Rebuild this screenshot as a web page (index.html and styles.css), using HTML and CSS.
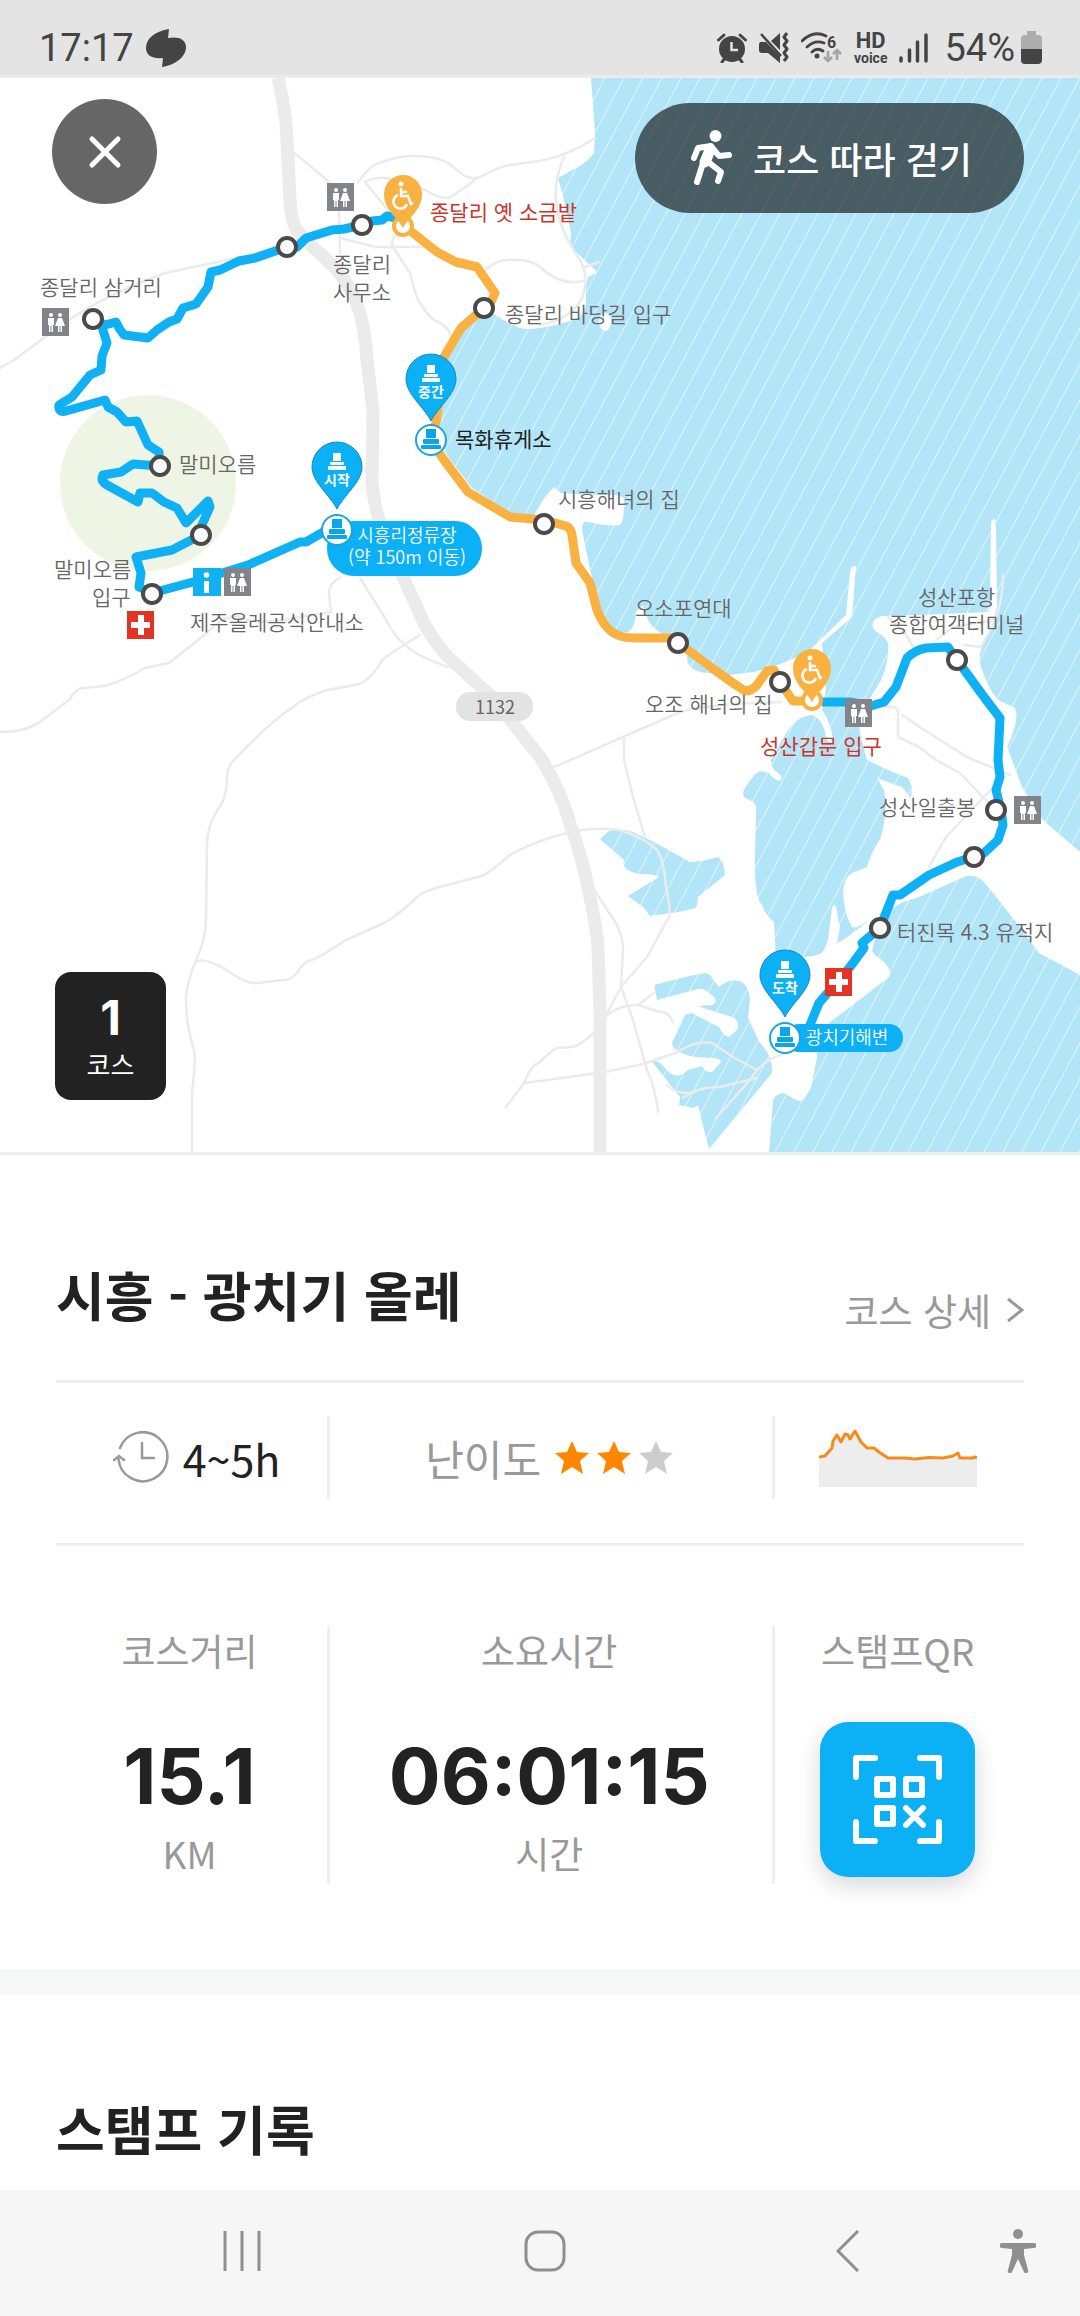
FILE: index.html
```html
<!DOCTYPE html>
<html lang="ko">
<head>
    <meta charset="UTF-8">
    <meta name="viewport" content="width=device-width, initial-scale=1.0">
    <title>시흥 - 광치기 올레</title>
    <link rel="stylesheet" href="styles.css">
</head>
<body>
    <header class="status-bar">
        <span class="status-text">17:17</span>
        <svg class="status-app" width="40" height="38" viewBox="0 0 40 38"><path fill="#444" d="M23 0C10 2 0 9 0 19c0 8 7 11 17 10l-1 9c13-2 24-10 24-20 0-8-8-11-18-9z"/></svg>
        <div class="status-icons">
            <svg width="30" height="30" viewBox="0 0 30 30"><circle cx="15" cy="16" r="13" fill="#444"/><path d="M1.500 7 7 2M28.500 7 23 2M5 29l4-5M25 29l-4-5" stroke="#444" stroke-width="3" stroke-linecap="round"/><path d="M14.500 9v8H21" fill="none" stroke="#e4e4e4" stroke-width="2.500"/></svg>
            <svg width="30" height="31" viewBox="0 0 30 31"><path fill="#444" d="M1 10h6l14 14v7L9 21H3a3 3 0 0 1-3-3v-6zM21 1v17L12 9z"/><path d="M2 2l20 22" stroke="#444" stroke-width="2.500"/><path d="M28 1l-3 4 3 4-3 4 3 4-3 4 3 4-3 4" fill="none" stroke="#444" stroke-width="3" stroke-linejoin="round"/></svg>
            <svg width="41" height="31" viewBox="0 0 41 31"><path d="M1 9C9 1 17 0 25 4M6 15c6-6 12-6 17-4M11 20c4-4 8-3 11-1" fill="none" stroke="#444" stroke-width="2.800" stroke-linecap="round"/><circle cx="16" cy="24" r="2.500" fill="#444"/><text class="wifi-gen" x="26" y="16">6</text><path d="M27 19v10m-4-4 4 4 4-4M36 28V18m-4 4 4-4 4 4" fill="none" stroke="#a4a4a4" stroke-width="2.600"/></svg>
            <span class="hd"><b>HD</b><small>voice</small></span>
            <svg width="29" height="30" viewBox="0 0 29 30"><path d="M2 25v3M10.500 17v11M18.500 9v19M27 2v26" stroke="#444" stroke-width="3.500" stroke-linecap="round"/></svg>
        </div>
        <span class="status-text">54%</span>
        <svg class="status-battery" width="21" height="33" viewBox="0 0 21 33"><path fill="#adadad" d="M6 0h9v4h2a4 4 0 0 1 4 4v11H0V8a4 4 0 0 1 4-4h2z"/><path fill="#444" d="M0 18h21v11a4 4 0 0 1-4 4H4a4 4 0 0 1-4-4z"/></svg>
    </header>

    <main>
        <section class="map">
            <svg class="map-canvas" viewBox="0 78 1080 1074" role="img" aria-label="1코스 지도">
                <defs>
                    <pattern id="hatch" width="19" height="40" patternUnits="userSpaceOnUse" patternTransform="skewX(-28)">
                        <rect width="19" height="40" fill="#b3e5f8"/>
                        <rect width="1" height="40" fill="#e3f6fd"/>
                    </pattern>
                    <g id="stones">
                        <rect x="-4" y="-14" width="8" height="8"/>
                        <rect x="-7" y="-5" width="14" height="3" rx="1"/>
                        <rect x="-9" y="-1" width="18" height="4" rx="1"/>
                    </g>
                    <g id="pin">
                        <path d="M0 42C-7 28-25 15-25 0a25 25 0 0 1 50 0C25 15 7 28 0 42z" fill="#0bb0f5" stroke="#1487be"/>
                        <use href="#stones" fill="#fff"/>
                    </g>
                    <g id="stamp">
                        <circle r="15" fill="#fff" stroke="#1aa5e2" stroke-width="2"/>
                        <g fill="#0ba6ea">
                            <rect x="-5" y="-11" width="10" height="9"/>
                            <rect x="-8" y="-1" width="16" height="5" rx="1"/>
                            <rect x="-10" y="5" width="20" height="4" rx="1"/>
                        </g>
                    </g>
                    <g id="wheel">
                        <circle cy="32" r="9" fill="#fff" stroke="#f9b141" stroke-width="4"/>
                        <path d="M0 34C-5 24-19 16-19 0a19 19 0 0 1 38 0C19 16 5 24 0 34z" fill="#f9b141"/>
                        <circle cx="-2" cy="-10" r="2.500" fill="#fff"/>
                        <path d="M-2-6V2H5l3 8 2-1M-2-2H4M-5 1a7 7 0 1 0 9 9" fill="none" stroke="#fff" stroke-width="2.500"/>
                    </g>
                    <g id="restroom">
                        <rect width="27" height="28" fill="#828489"/>
                        <g fill="#fff">
                            <circle cx="9" cy="7" r="2"/><circle cx="18" cy="7" r="2"/>
                            <path d="M6 10h6v7h-1v7H9.500v-6h-1v6H7v-7H6zM16 10h4l3 8h-3v6h-1.500v-6h-1v6H16v-6h-3z"/>
                        </g>
                    </g>
                    <g id="aid">
                        <rect width="27" height="28" fill="#e23325"/>
                        <path d="M11 4h6v7h6v6h-6v7h-6v-7H4v-6h7z" fill="#fff"/>
                    </g>
                    <circle id="stop" r="9" fill="#fff" stroke="#4a4a4a" stroke-width="4"/>
                </defs>

                <rect y="78" width="1080" height="1074" fill="#fff"/>

                <!-- sea, bay and ponds -->
                <g fill="url(#hatch)">
                    <path d="M591 78L595 133L594 153Q588 161 578 167L558 178L562 192L567 213L571 233L570 247L578 254L592 267Q597 270 596 273L588 277L586 287V303Q585 313 578 318L560 324L540 328Q528 330 520 328Q508 324 496 315L484 308L461 333L448 358L439 410V440L448 457L472 488L510 513L534 515L545 497L554 487L561 493Q585 495 609 495Q626 494 624 502Q624 524 619 525Q612 527 588 522Q582 520 582 530L586 550L593 583L597 607L616 632L628 632Q635 628 636 612L643 605L648 620Q650 626 666 637L688 653Q685 662 692 668Q698 673 709 673L729 675L754 672L778 665L795 658L812 648L846 615L850 573Q851 564 856 566L852 617L822 643L826 690L822 710Q831 722 834 745L827 740Q823 718 812 715Q796 716 785 735L771 760Q771 769 777 772Q785 778 779 781Q773 779 769 773Q758 768 753 777Q740 792 744 797L753 802Q757 805 756 813L755 853Q754 898 762 905Q765 915 774 922L776 960L805 957Q821 956 824 950L828 940L832 908Q835 901 837 910Q838 922 840 927L837 943Q848 938 869 920Q856 929 852 927Q846 916 845 907Q839 882 852 873L867 867Q870 855 881 837Q888 810 884 790L877 778Q895 785 902 787L911 798L912 787L908 778L888 770L867 760L860 733Q858 720 864 710L871 697L881 680Q890 658 888 643Q887 638 874 630Q869 621 881 616L919 615L988 612L990 607L991 523Q994 515 996 523L997 607L991 630L982 647Q978 658 981 667Q988 688 998 700L1015 708Q1020 720 1007 747L1012 760L1022 787L1043 820L1080 852V78Z"/>
                    <path d="M881 917Q895 903 919 897L964 877Q975 873 984 882L1001 903L1022 930L1039 953L1080 975V1152H769L773 1100Q776 1093 785 1093Q798 1103 803 1100Q811 1090 812 1083L817 1057V1035L829 1023L888 978Q894 973 884 962Q872 954 872 950Z"/>
                    <path d="M600 839L609 831Q620 828 633 832L654 842L690 862L702 861L718 857Q724 860 725 875L698 897L697 907Q690 911 650 916L643 907L628 896L659 877Q656 874 640 874Q620 870 624 860Z"/>
                    <path d="M654 985L685 977L705 973Q711 974 712 978L719 987Q730 978 738 981Q748 982 750 1000L748 1018L760 1043Q773 1056 772 1073L709 1149L704 1130L698 1105L693 1108L679 1105L680 1097L664 1077L651 1060L659 1062L669 1072Q678 1080 688 1070L702 1066Q706 1073 712 1072L721 1062Q720 1058 712 1058L695 1057Q672 1052 672 1043L685 1015L692 1013L709 1022L719 1027Q725 1039 730 1036Q738 1030 738 1027Q739 1020 732 1017L697 1006L712 1005Q718 1002 714 997Q704 987 698 989L657 1000Z"/>
                </g>
                <ellipse cx="605" cy="322" rx="6" ry="9" fill="#fff"/>

                <circle cx="148" cy="483" r="88" fill="#eef5e5"/>

                <!-- roads -->
                <g fill="none" stroke="#ebebeb" stroke-width="2.500" stroke-linejoin="round" stroke-linecap="round">
                    <path d="M0 368L14 360L60 326Q100 297 165 273L241 257"/>
                    <path d="M293 152L327 180Q339 190 339 213L340 253"/>
                    <path d="M358 182Q372 164 379 163Q400 155 417 156Q435 156 448 163L462 174Q470 180 480 177Q500 166 510 165L540 161Q570 155 595 138"/>
                    <path d="M365 182Q382 174 395 181Q410 182 425 190Q437 198 448 198Q460 192 477 178M365 182L396 220"/>
                    <path d="M341 238L375 247H427M399 230Q390 240 393 247L410 273Q414 290 418 300Q428 316 434 320Q450 327 451 337"/>
                    <path d="M482 273Q494 261 506 260Q530 258 540 267Q560 286 583 281M583 268L599 262"/>
                    <path d="M564 157Q551 187 558 212Q560 229 578 257Q590 275 583 295Q575 318 540 325"/>
                    <path d="M0 732Q30 732 45 718L69 700Q77 687 84 688L105 686Q125 680 145 668L169 663L207 633Q225 614 240 617Q255 626 293 618L331 612L329 593Q328 584 341 577"/>
                    <path d="M373 450L365 470M360 578L382 613Q395 637 403 643Q412 654 448 667"/>
                    <path d="M420 635Q395 650 382 660Q372 679 359 684Q340 688 327 690Q305 697 293 707Q270 722 234 760Q227 767 227 777Q227 793 222 803Q206 826 207 847L206 917Q206 940 196 960Q186 985 186 1000Q186 1025 194 1050Q196 1060 192 1093V1152"/>
                    <path d="M196 961Q210 958 234 975Q250 985 258 983L282 980Q290 981 297 973Q304 961 312 960Q324 955 344 941L386 922Q402 912 417 897Q424 890 455 883L482 876Q489 873 510 855Q525 846 552 837L574 831Q600 827 620 830Q645 838 657 850Q664 860 666 887Q671 910 669 917L647 957L621 987L605 1017"/>
                    <path d="M552 768L616 740L678 713Q700 704 781 702M624 737V760L633 797L645 837"/>
                    <path d="M593 888L616 923Q624 940 623 950L621 987L633 1020L647 1070Q656 1090 658 1112"/>
                    <path d="M605 1017Q620 1004 638 1005L654 993M638 1005L660 1012Q668 1011 673 1022"/>
                    <path d="M506 1107L524 1083Q530 1066 540 1062Q552 1050 557 1048L572 1047Q578 1047 595 1032M524 1083L540 1081L605 1072L643 1064L678 1052Q695 1040 712 1043L733 1057L757 1070"/>
                    <path d="M667 1085Q675 1094 692 1093Q700 1087 720 1087L757 1078M683 1098L694 1091M716 1118L750 1080Q762 1060 781 1055"/>
                    <path d="M884 707Q900 705 898 715V737L919 747L936 760L960 773L979 793L996 810M902 715L929 733L967 757L1010 775M1000 780L946 837L929 867"/>
                    <path d="M888 617L905 633L915 650M936 640L953 627L995 620Q1003 600 1003 575M964 645L981 647L995 622"/>
                </g>
                <path d="M278 78Q286 110 287 140L290 200Q291 222 297 230Q307 243 324 257Q348 278 358 307Q365 327 367 360L373 410L372 477Q372 495 379 520L403 577L424 623Q432 639 448 657L492 697L540 757Q561 790 571 827Q583 860 588 887Q597 930 598 947L600 1013V1152" fill="none" stroke="#ebebeb" stroke-width="13"/>

                <!-- walking route -->
                <g fill="none" stroke="#0fb0f4" stroke-width="9" stroke-linejoin="round">
                    <path d="M396 218L387 216L382 220L372 221L362 225L344 229L332 230L306 238L297 247L287 247L255 258L239 261L220 270L211 272L208 287L196 304L183 308L177 319L169 322L157 330L148 338L124 335L119 328L116 322L105 325L93 319L102 327L107 343L102 356L101 370L90 375L72 397L59 405Q58 413 66 411L105 400L108 407L117 412L126 422L137 421L148 445L159 452L160 466L133 464L121 472L103 475Q100 481 107 485L138 502L140 493L152 493L164 502L177 508L186 523L208 501L210 507L201 527V535L172 550L136 557L141 573L139 587L152 593L193 582L248 565L300 542H306L325 531"/>
                    <path d="M822 702H850L871 706L884 702L896 687L907 658Q915 650 926 648L948 647L957 660L984 697L1000 718L998 760L1000 777L996 790L1001 810L1003 825L998 840L984 853L974 857L957 862L929 875L900 895L893 895L880 928L862 943L864 948L850 967L819 1003L808 1030"/>
                </g>
                <path d="M404 225L413 233L437 252L456 262L477 267L495 293L491 302L484 308L461 328L444 357L436 423L430 440L444 460L468 492L510 517L544 520L566 526Q571 528 572 535L576 563L590 583L597 610Q602 624 612 632Q620 638 636 638L672 638L712 668L733 683L745 691Q752 691 757 685L767 671L774 670L780 682L793 701H812" fill="none" stroke="#f9b141" stroke-width="9" stroke-linejoin="round"/>

                <use href="#stop" x="93" y="319"/>
                <use href="#stop" x="287" y="247"/>
                <use href="#stop" x="362" y="225"/>
                <use href="#stop" x="484" y="308"/>
                <use href="#stop" x="160" y="466"/>
                <use href="#stop" x="201" y="535"/>
                <use href="#stop" x="152" y="594"/>
                <use href="#stop" x="544" y="524"/>
                <use href="#stop" x="678" y="643"/>
                <use href="#stop" x="780" y="682"/>
                <use href="#stop" x="957" y="660"/>
                <use href="#stop" x="996" y="810"/>
                <use href="#stop" x="974" y="857"/>
                <use href="#stop" x="880" y="928"/>

                <use href="#wheel" x="403" y="194"/>
                <use href="#wheel" x="812" y="668"/>

                <use href="#restroom" x="327" y="183"/>
                <use href="#restroom" x="42" y="308"/>
                <use href="#restroom" x="224" y="568"/>
                <use href="#restroom" x="845" y="699"/>
                <use href="#restroom" x="1014" y="796"/>
                <use href="#aid" x="127" y="611"/>
                <use href="#aid" x="825" y="968"/>
                <rect x="193" y="568" width="28" height="28" fill="#0fb0f4"/>
                <path d="M204 581h5v12h-5z" fill="#fff"/>
                <circle cx="206.500" cy="575" r="2.800" fill="#fff"/>

                <!-- start, middle and finish stamps -->
                <rect x="327" y="521" width="155" height="55" rx="27" fill="#0bb0f5"/>
                <rect x="785" y="1024" width="118" height="28" rx="14" fill="#0bb0f5"/>
                <use href="#stamp" x="337" y="530"/>
                <use href="#stamp" x="431" y="440"/>
                <use href="#stamp" x="785" y="1038"/>
                <use href="#pin" x="337" y="467"/>
                <use href="#pin" x="431" y="379"/>
                <use href="#pin" x="785" y="975"/>
                <g class="pin-label">
                    <text x="337" y="485">시작</text>
                    <text x="431" y="397">중간</text>
                    <text x="785" y="993">도착</text>
                </g>
                <g class="pill-label">
                    <text x="407" y="542">시흥리정류장</text>
                    <text x="407" y="564">(약 150m 이동)</text>
                    <text x="847" y="1044">광치기해변</text>
                </g>

                <rect x="456" y="692" width="77" height="29" rx="14" fill="#e3e3e3"/>
                <text class="road-label" x="495" y="714">1132</text>

                <g class="place">
                    <text x="40" y="295">종달리 삼거리</text>
                    <text x="333" y="272">종달리</text>
                    <text x="333" y="300">사무소</text>
                    <text x="505" y="322">종달리 바당길 입구</text>
                    <text x="179" y="472">말미오름</text>
                    <text x="54" y="577">말미오름</text>
                    <text x="92" y="605">입구</text>
                    <text x="190" y="630">제주올레공식안내소</text>
                    <text x="558" y="507">시흥해녀의 집</text>
                    <text x="635" y="616">오소포연대</text>
                    <text x="645" y="712">오조 해녀의 집</text>
                    <text x="918" y="605">성산포항</text>
                    <text x="889" y="632">종합여객터미널</text>
                    <text x="879" y="815">성산일출봉</text>
                    <text x="897" y="940">터진목 4.3 유적지</text>
                    <text class="place-dark" x="455" y="447">목화휴게소</text>
                    <text class="place-red" x="430" y="220">종달리 옛 소금밭</text>
                    <text class="place-red" x="760" y="754">성산갑문 입구</text>
                </g>
            </svg>

            <button class="close-btn" type="button" aria-label="닫기">
                <svg width="34" height="34" viewBox="0 0 34 34"><path d="M4 4l26 26M30 4 4 30" stroke="#fff" stroke-width="5" stroke-linecap="round"/></svg>
            </button>
            <button class="walk-btn" type="button">
                <svg width="42" height="56" viewBox="0 0 42 56" fill="none" stroke="#fff" stroke-width="6" stroke-linecap="round" stroke-linejoin="round"><circle cx="24.500" cy="6" r="6" fill="#fff" stroke="none"/><path d="M3 28L7 18L20 16L28 26L38 25"/><path d="M19 20L14 32" stroke-width="11"/><path d="M12 33L6 52M16 31L30 42L27 51"/></svg>
                코스 따라 걷기
            </button>
            <div class="course-badge">
                <strong>1</strong>
                <span>코스</span>
            </div>
        </section>

        <section class="course">
            <div class="course-head">
                <h2>시흥 - 광치기 올레</h2>
                <a class="detail-link" href="#detail">코스 상세 <svg width="17" height="26" viewBox="0 0 17 26"><path d="M1 2l14 11L1 24" fill="none" stroke="#999" stroke-width="3"/></svg></a>
            </div>

            <div class="grid summary">
                <div class="cell duration">
                    <svg width="56" height="54" viewBox="0 0 56 54" fill="none" stroke="#999" stroke-width="2.500" stroke-linecap="round"><path d="M7 17A24.500 24.500 0 1 1 5.500 28M1 29l5-4 5 4M29 12v15h12"/></svg>
                    <span>4~5h</span>
                </div>
                <div class="cell level">
                    <span>난이도</span>
                    <span class="stars" role="img" aria-label="별 3개 중 2개">
                        <svg class="star on" viewBox="0 0 34 33"><path d="M17 0l5 11 12 1-9 8 3 13-11-7-11 7 3-13-9-8 12-1z"/></svg>
                        <svg class="star on" viewBox="0 0 34 33"><path d="M17 0l5 11 12 1-9 8 3 13-11-7-11 7 3-13-9-8 12-1z"/></svg>
                        <svg class="star" viewBox="0 0 34 33"><path d="M17 0l5 11 12 1-9 8 3 13-11-7-11 7 3-13-9-8 12-1z"/></svg>
                    </span>
                </div>
                <div class="cell">
                    <svg width="158" height="59" viewBox="0 0 158 59" role="img" aria-label="고도"><path fill="#ededed" d="M0 30H5L13 20L14 13L18 8L22 15L26 7L31 11L36 3L42 15L48 21L55 21L60 25L69 30H158V59H0Z"/><path d="M0 29L6 28L13 20L14 13L18 7L22 14L26 6L29 7L31 11L36 3L42 14L48 20L55 20L60 24L69 30H86L96 31L110 29.500L124 30L134 28L139 25L141 30H153L156 29L158 30" fill="none" stroke="#f58b1a" stroke-width="3" stroke-linejoin="round"/></svg>
                </div>
            </div>

            <div class="grid record">
                <div class="stat">
                    <span class="stat-label">코스거리</span>
                    <strong class="stat-value">15.1</strong>
                    <span class="stat-label">KM</span>
                </div>
                <div class="stat">
                    <span class="stat-label">소요시간</span>
                    <strong class="stat-value">06:01:15</strong>
                    <span class="stat-label">시간</span>
                </div>
                <div class="stat">
                    <span class="stat-label" id="qr-label">스탬프QR</span>
                    <button class="qr-btn" type="button" aria-labelledby="qr-label">
                        <svg width="89" height="89" viewBox="0 0 89 89" fill="none" stroke="#fff" stroke-width="6" stroke-linecap="round" stroke-linejoin="round"><path d="M3 22V3H22M67 3H86V22M86 67V86H67M22 86H3V67M24 24h16v16H24zM53 24h16v16H53zM24 53h16v16H24zM53 53l17 17M70 53L53 70"/></svg>
                    </button>
                </div>
            </div>
        </section>

        <section class="stamps">
            <h2>스탬프 기록</h2>
        </section>
    </main>

    <nav class="nav-bar">
        <button type="button" aria-label="최근 앱"><svg width="38" height="42" viewBox="0 0 38 42"><path d="M2 1v40M19 1v40M36 1v40" stroke="#8f8f8f" stroke-width="3"/></svg></button>
        <button type="button" aria-label="홈"><svg width="42" height="42" viewBox="0 0 42 42"><rect x="2" y="2" width="38" height="38" rx="12" fill="none" stroke="#8f8f8f" stroke-width="3"/></svg></button>
        <button type="button" aria-label="뒤로"><svg width="24" height="42" viewBox="0 0 24 42"><path d="M22 1L2 21l20 20" fill="none" stroke="#8f8f8f" stroke-width="3"/></svg></button>
        <button class="nav-access" type="button" aria-label="접근성"><svg width="36" height="44" viewBox="0 0 36 44"><circle cx="18" cy="5" r="5" fill="#8f8f8f"/><path d="M2 14h32a2 2 0 0 1 0 5l-10 1v6l4 15a2 2 0 0 1-4 2l-6-13-6 13a2 2 0 0 1-4-2l4-15v-6L2 19a2 2 0 0 1 0-5z" fill="#8f8f8f"/></svg></button>
    </nav>
</body>
</html>
```
FILE: styles.css
```css
* {
    box-sizing: border-box;
}
body {
    margin: 0;
    min-height: 100vh;
    display: flex;
    flex-direction: column;
    background: #fff;
    color: #222;
    font-family: 'Noto Sans CJK KR', sans-serif;
}
button {
    border: none;
    padding: 0;
    background: none;
    font-family: inherit;
    cursor: pointer;
}
svg {
    display: block;
}
h2 {
    margin: 0;
    font-size: 53px;
    font-weight: 700;
    line-height: 80px;
}

/* status bar */
.status-bar {
    display: flex;
    align-items: center;
    height: 78px;
    padding: 20px 38px 0 39px;
    background: #e4e4e4;
    border-bottom: 3px solid #ebebeb;
    color: #444;
    font-family: Roboto, sans-serif;
}
.status-text {
    font-size: 38px;
    line-height: 48px;
}
.status-app {
    margin-left: 12px;
}
.status-icons {
    display: flex;
    align-items: center;
    gap: 12px;
    margin-left: auto;
    margin-right: 16px;
}
.status-battery {
    margin-left: 6px;
}
.wifi-gen {
    font-size: 16px;
    font-weight: 700;
    fill: #444;
}
.hd {
    display: flex;
    flex-direction: column;
    align-items: center;
}
.hd b {
    font-size: 22px;
    line-height: 20px;
}
.hd small {
    font-size: 14px;
    font-weight: 700;
    line-height: 14px;
}

/* map */
.map {
    position: relative;
    border-bottom: 3px solid #ededed;
}
.map-canvas {
    width: 100%;
}
.place {
    font-size: 21px;
    font-weight: 350;
    fill: #666;
}
.place-dark {
    font-weight: 400;
    fill: #222;
}
.place-red {
    font-weight: 400;
    fill: #c9372c;
}
.pin-label {
    font-size: 14px;
    font-weight: 700;
    text-anchor: middle;
    fill: #fff;
}
.pill-label {
    font-size: 18px;
    font-weight: 350;
    text-anchor: middle;
    fill: #fff;
}
.road-label {
    font-size: 18px;
    text-anchor: middle;
    fill: #666;
}
.close-btn {
    position: absolute;
    top: 21px;
    left: 52px;
    display: flex;
    align-items: center;
    justify-content: center;
    width: 105px;
    height: 105px;
    border-radius: 50%;
    background: rgba(0, 0, 0, 0.6);
}
.walk-btn {
    position: absolute;
    top: 25px;
    right: 56px;
    display: flex;
    align-items: center;
    gap: 20px;
    height: 110px;
    padding: 0 52px 0 56px;
    border-radius: 55px;
    background: rgba(0, 0, 0, 0.6);
    color: #fff;
    font-size: 36px;
    font-weight: 500;
}
.course-badge {
    position: absolute;
    bottom: 52px;
    left: 55px;
    display: flex;
    flex-direction: column;
    align-items: center;
    justify-content: center;
    width: 111px;
    height: 128px;
    border-radius: 16px;
    background: #222;
    color: #fff;
}
.course-badge strong {
    font-family: Inter, sans-serif;
    font-size: 48px;
    line-height: 56px;
}
.course-badge span {
    font-size: 26px;
    line-height: 36px;
}

/* course info */
.course {
    padding: 0 56px;
    border-bottom: 26px solid #f7f8fa;
}
.course-head {
    display: flex;
    align-items: flex-end;
    justify-content: space-between;
    padding: 99px 0 46px;
}
.detail-link {
    display: flex;
    align-items: center;
    gap: 16px;
    color: #999;
    font-size: 37px;
    line-height: 48px;
    text-decoration: none;
}
.grid {
    display: grid;
    grid-template-columns: 28fr 46fr 26fr;
}
.grid > * + * {
    border-left: 3px solid #efefef;
}
.summary {
    padding: 33px 0 44px;
    border-top: 3px solid #efefef;
    border-bottom: 3px solid #efefef;
}
.cell {
    display: flex;
    align-items: center;
    justify-content: center;
    gap: 14px;
    height: 83px;
    padding-right: 4px;
    font-size: 42px;
}
.duration {
    padding-left: 14px;
    font-size: 43px;
}
.level {
    color: #999;
}
.stars {
    display: flex;
    gap: 8px;
}
.star {
    width: 34px;
    height: 33px;
    fill: #cdcdcd;
}
.star.on {
    fill: #ff8700;
}
.record {
    padding: 80px 0 85px;
}
.stat {
    display: flex;
    flex-direction: column;
    align-items: center;
    height: 258px;
    padding-right: 4px;
}
.stat-label {
    color: #999;
    font-size: 37px;
    line-height: 48px;
}
.stat-value {
    margin-top: 52px;
    margin-bottom: 3px;
    font-family: Inter, sans-serif;
    font-size: 77px;
    font-weight: 700;
    line-height: 100px;
}
.qr-btn {
    display: flex;
    align-items: center;
    justify-content: center;
    width: 155px;
    height: 155px;
    margin-top: 48px;
    border-radius: 28px;
    background: #0bb0f5;
    box-shadow: 0 8px 24px rgba(0, 0, 0, 0.16);
}

.stamps {
    padding: 93px 56px 22px;
}

/* system navigation */
.nav-bar {
    display: flex;
    align-items: center;
    height: 126px;
    margin-top: auto;
    padding: 0 43px 4px 90px;
    background: #f6f6f6;
}
.nav-bar button {
    display: flex;
    flex: 1;
    justify-content: center;
}
.nav-bar .nav-access {
    flex: 0 0 38px;
}
```
